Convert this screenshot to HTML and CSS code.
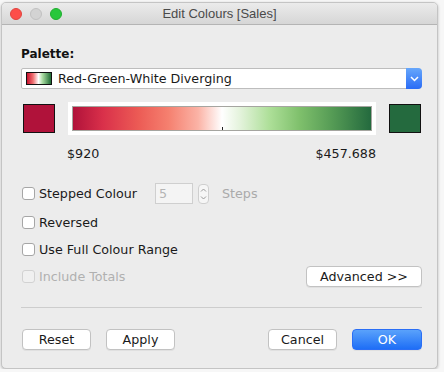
FILE: index.html
```html
<!DOCTYPE html>
<html lang="en">
<head>
    <meta charset="UTF-8">
    <meta name="viewport" content="width=device-width, initial-scale=1.0">
    <title>Edit Colours [Sales]</title>
    <link rel="stylesheet" href="styles.css">
</head>
<body>
    <div class="window">
        <div class="titlebar">
            <div class="lights">
                <span class="light red"></span>
                <span class="light grey"></span>
                <span class="light green"></span>
            </div>
            <div class="title">Edit Colours [Sales]</div>
        </div>

        <div class="content">
            <div class="palette-label">Palette:</div>

            <!-- Palette dropdown -->
            <div class="select">
                <span class="swatch"></span>
                <span class="select-text">Red-Green-White Diverging</span>
                <span class="select-arrow">
                    <svg width="9" height="6" viewBox="0 0 9 6"><path d="M1 1 L4.5 4.5 L8 1" fill="none" stroke="#fff" stroke-width="1.5"/></svg>
                </span>
            </div>

            <div class="ramp-row">
                <span class="end-colour start"></span>
                <div class="ramp-box">
                    <div class="ramp"><span class="tick"></span></div>
                </div>
                <span class="end-colour end"></span>
            </div>

            <div class="range">
                <span>$920</span>
                <span>$457.688</span>
            </div>

            <div class="options">
                <div class="option stepped">
                    <span class="check"></span>
                    <span class="option-label">Stepped Colour</span>
                    <span class="steps-input">5</span>
                    <span class="stepper">
                        <svg width="7" height="16" viewBox="0 0 7 16"><path d="M1 5.5 L3.5 3 L6 5.5 M1 10.5 L3.5 13 L6 10.5" fill="none" stroke="#9a9a9a" stroke-width="1"/></svg>
                    </span>
                    <span class="steps-label">Steps</span>
                </div>
                <div class="option">
                    <span class="check"></span>
                    <span class="option-label">Reversed</span>
                </div>
                <div class="option">
                    <span class="check"></span>
                    <span class="option-label">Use Full Colour Range</span>
                </div>
                <div class="option disabled">
                    <span class="check"></span>
                    <span class="option-label">Include Totals</span>
                    <button class="btn advanced">Advanced &gt;&gt;</button>
                </div>
            </div>

            <div class="separator"></div>

            <div class="footer">
                <div class="footer-left">
                    <button class="btn">Reset</button>
                    <button class="btn">Apply</button>
                </div>
                <div class="footer-right">
                    <button class="btn">Cancel</button>
                    <button class="btn primary">OK</button>
                </div>
            </div>
        </div>
    </div>
</body>
</html>
```

FILE: styles.css
```css
body {
    margin: 0;
    padding: 0;
    background: #f7f7f7;
    font-family: "DejaVu Sans", "Liberation Sans", sans-serif;
    font-size: 12.7px;
    color: #222;
}

.window {
    width: 435px;
    height: 365px;
    margin: 2px 0 0 1px;
    background: #ececec;
    border: 1px solid #c4c4c4;
    border-radius: 5px;
    box-shadow: 0 1px 3px rgba(0, 0, 0, 0.25);
    overflow: hidden;
}

.titlebar {
    height: 21px;
    display: flex;
    align-items: center;
    position: relative;
    background: linear-gradient(#ebebeb, #d6d6d6);
    border-bottom: 1px solid #b4b4b4;
}

.lights {
    display: flex;
    gap: 8px;
    padding-left: 8px;
}

.light {
    width: 12px;
    height: 12px;
    border-radius: 50%;
    box-sizing: border-box;
}

.light.red {
    background: #fd4e4a;
    border: 1px solid #e0443e;
}

.light.grey {
    background: #d3d3d3;
    border: 1px solid #c1c1c1;
}

.light.green {
    background: #27c73c;
    border: 1px solid #1fae2f;
}

.title {
    position: absolute;
    left: 0;
    right: 0;
    text-align: center;
    font-family: "Liberation Sans", sans-serif;
    font-size: 13px;
    color: #4a4a4a;
    pointer-events: none;
}

.content {
    padding: 0 15px 0 19px;
}

.palette-label {
    margin-top: 21px;
    font-weight: bold;
    font-size: 12px;
    line-height: 16px;
    color: #111;
}

.select {
    margin-top: 6px;
    height: 19px;
    display: flex;
    align-items: center;
    background: #fff;
    border: 1px solid #bdbdbd;
    border-radius: 2px 4px 4px 2px;
}

.swatch {
    width: 24px;
    height: 11px;
    margin-left: 4px;
    border: 1px solid #111;
    background: linear-gradient(90deg, #c8102e, #f07070 25%, #fff 48%, #a8dba0 65%, #1f6b34);
}

.select-text {
    margin-left: 6px;
    flex: 1;
    color: #1a1a1a;
}

.select-arrow {
    width: 16px;
    height: 21px;
    margin: -1px -1px -1px 0;
    display: flex;
    align-items: center;
    justify-content: center;
    background: linear-gradient(#67a7fb, #2a6cf6);
    border-radius: 0 4px 4px 0;
}

.ramp-row {
    margin-top: 13px;
    display: flex;
    align-items: center;
    justify-content: space-between;
    padding-left: 2px;
}

.end-colour {
    width: 30px;
    height: 27px;
    border: 1px solid #111;
}

.end-colour.start {
    background: #b0123a;
}

.end-colour.end {
    background: #246a3e;
    margin-right: 1px;
}

.ramp-box {
    width: 300px;
    height: 25px;
    padding: 4px;
    background: #fff;
}

.ramp {
    height: 23px;
    position: relative;
    border: 1px solid #a5a5a0;
    background: linear-gradient(90deg, #b0123a 0%, #d9304a 10%, #ec5b55 22%, #f5806f 32%, #fbb3a6 42%, #fff 50%, #e4f3dc 56%, #addf98 66%, #7fc06c 76%, #559b55 87%, #246a3e 100%);
}

.tick {
    position: absolute;
    left: 149px;
    bottom: 0;
    width: 1px;
    height: 3px;
    background: #222;
}

.range {
    margin-top: 11px;
    width: 309px;
    margin-left: 46px;
    display: flex;
    justify-content: space-between;
    color: #1a1a1a;
}

.options {
    margin-top: 22px;
    display: flex;
    flex-direction: column;
    gap: 6px;
}

.option {
    height: 21px;
    display: flex;
    align-items: center;
    padding-left: 1px;
}

.option.stepped {
    margin-bottom: 2px;
}

.check {
    width: 13px;
    height: 13px;
    box-sizing: border-box;
    background: #fff;
    border: 1px solid #a6a6a6;
    border-radius: 3px;
}

.option-label {
    margin-left: 4px;
    color: #1a1a1a;
}

.option.stepped .option-label {
    width: 116px;
}

.steps-input {
    width: 38px;
    height: 21px;
    box-sizing: border-box;
    border: 1px solid #cfcfcf;
    background: #f4f4f4;
    color: #b5b5b5;
    padding-left: 3px;
    line-height: 19px;
}

.stepper {
    margin-left: 5px;
    width: 11px;
    height: 20px;
    display: flex;
    align-items: center;
    justify-content: center;
    background: #f6f6f6;
    border: 1px solid #cfcfcf;
    border-radius: 4px;
    box-sizing: border-box;
}

.steps-label {
    margin-left: 13px;
    color: #aaa;
}

.option.disabled .check {
    background: #f0f0f0;
    border-color: #d2d2d2;
}

.option.disabled .option-label {
    color: #b0b0b0;
}

.btn {
    height: 21px;
    padding: 0;
    font-family: "DejaVu Sans", "Liberation Sans", sans-serif;
    font-size: 12.7px;
    color: #1a1a1a;
    background: #fff;
    border: 1px solid #c2c2c2;
    border-radius: 4px;
    box-shadow: 0 1px 0 rgba(0, 0, 0, 0.05);
}

.btn.advanced {
    width: 116px;
    margin-left: auto;
}

.separator {
    margin-top: 20px;
    height: 1px;
    background: #cdcdcd;
}

.footer {
    margin-top: 21px;
    display: flex;
    justify-content: space-between;
    padding-left: 1px;
}

.footer-left,
.footer-right {
    display: flex;
    gap: 15px;
}

.footer-left .btn,
.footer-right .btn {
    width: 69px;
}

.btn.primary {
    width: 70px;
    color: #fff;
    border-color: #2a6ef5;
    background: linear-gradient(#5aa2fb, #1e6ef6);
}
```
